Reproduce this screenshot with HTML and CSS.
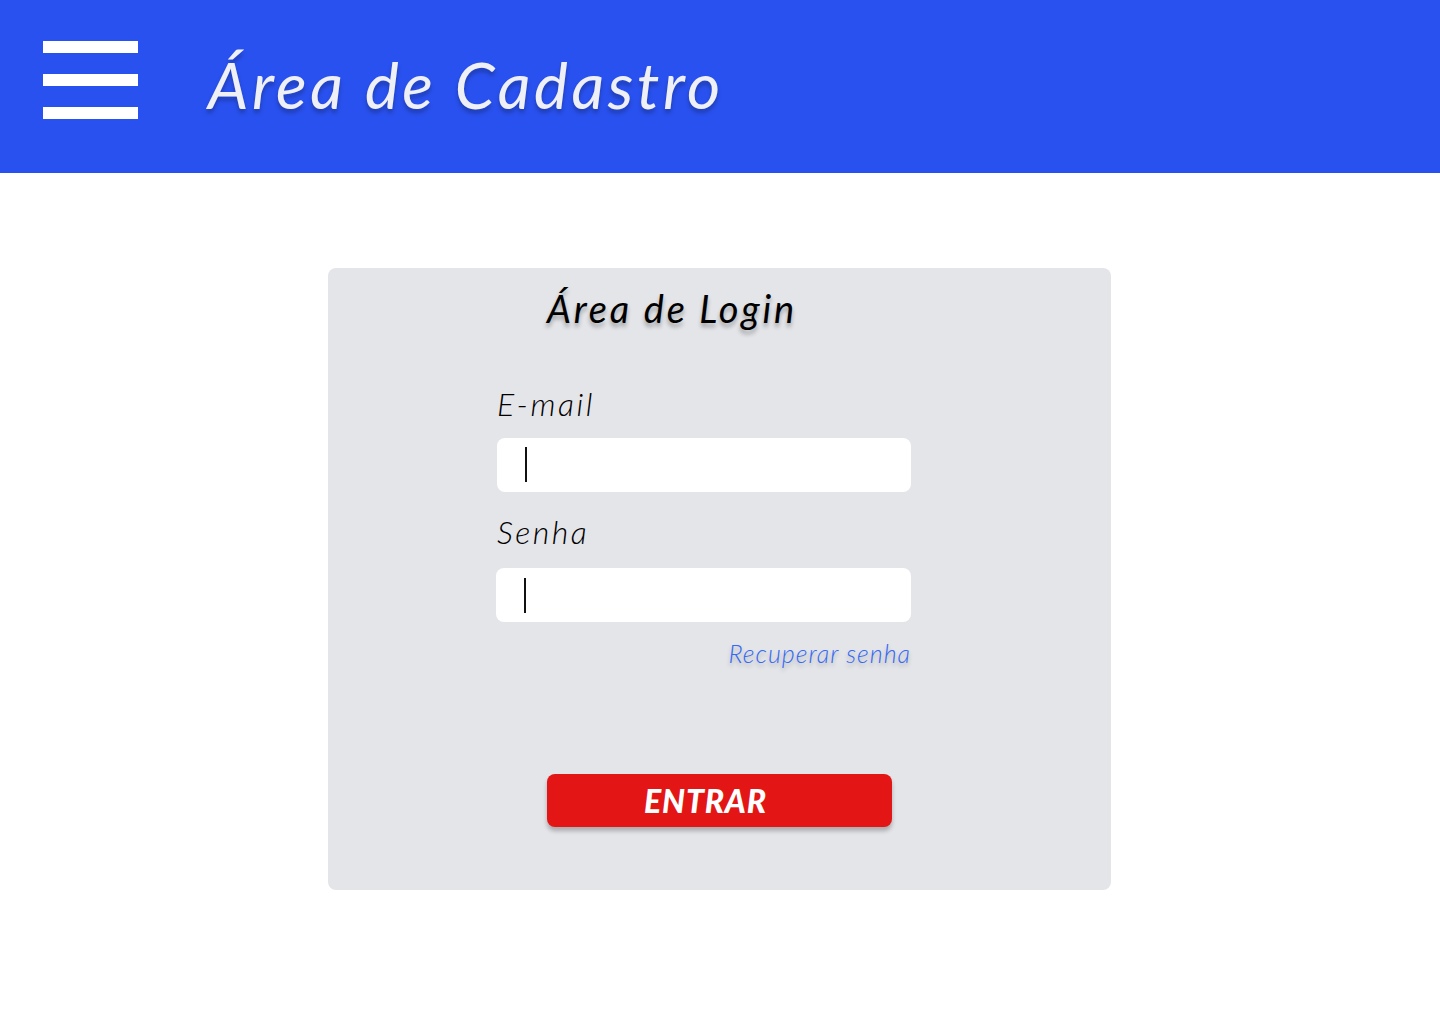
FILE: index.html
```html
<!DOCTYPE html>
<html lang="pt-BR">
<head>
<meta charset="utf-8">
<title>Área de Cadastro</title>
<link rel="stylesheet" href="styles.css">
</head>
<body>
<header class="topbar">
  <div class="menu" aria-label="Menu">
    <span class="menu-bar"></span>
    <span class="menu-bar"></span>
    <span class="menu-bar"></span>
  </div>
  <h1 class="page-title">Área de Cadastro</h1>
</header>
<main class="main">
  <section class="card">
    <h2 class="card-title">Área de Login</h2>
    <form class="form">
      <label class="label">E-mail</label>
      <div class="field"><span class="caret"></span></div>
      <label class="label label-senha">Senha</label>
      <div class="field field-senha"><span class="caret"></span></div>
      <a class="recover" href="#">Recuperar senha</a>
    </form>
    <div class="actions">
      <button class="btn" type="button"><span class="btn-text">ENTRAR</span></button>
    </div>
  </section>
</main>
</body>
</html>
```
FILE: styles.css
```css
html, body {
  margin: 0;
  padding: 0;
  background: #ffffff;
  font-family: "Lato", "Open Sans", sans-serif;
}

.topbar {
  height: 173px;
  background: #2951ef;
  display: flex;
  align-items: center;
}

.menu {
  margin-left: 43px;
  display: flex;
  flex-direction: column;
  gap: 21px;
  margin-top: -14px;
}

.menu-bar {
  display: block;
  width: 95px;
  height: 12px;
  background: #ffffff;
}

.page-title {
  margin: -2px 0 0 70px;
  font-size: 64px;
  font-style: italic;
  font-weight: 400;
  line-height: 1.2;
  letter-spacing: 3.5px;
  color: #eef0f6;
  text-shadow: 0 4px 4px rgba(0, 0, 0, 0.25);
}

.main {
  padding: 95px 0 0 328px;
  display: flex;
}

.card {
  width: 783px;
  height: 622px;
  box-sizing: border-box;
  background: #e4e5e9;
  border-radius: 8px;
  padding-top: 18px;
  display: flex;
  flex-direction: column;
}

.card-title {
  margin: 0 0 0 219px;
  font-size: 38px;
  font-style: italic;
  font-weight: 400;
  line-height: 1.2;
  letter-spacing: 2.8px;
  color: #000000;
  text-shadow: 0 4px 4px rgba(0, 0, 0, 0.3);
}

.form {
  margin-left: 169px;
  width: 414px;
  display: flex;
  flex-direction: column;
  margin-top: 53px;
}

.label {
  font-size: 32px;
  font-style: italic;
  font-weight: 300;
  line-height: 1.2;
  letter-spacing: 2.5px;
  color: #000000;
}

.field {
  height: 54px;
  background: #ffffff;
  border-radius: 8px;
  margin-top: 15px;
  display: flex;
  align-items: center;
  padding-left: 28px;
}

.field-senha {
  margin-top: 17px;
  margin-left: -1px;
}

.label-senha {
  margin-top: 21px;
}

.caret {
  display: block;
  width: 1.5px;
  height: 35px;
  background: #111111;
}

.recover {
  align-self: flex-end;
  margin-top: 16px;
  font-size: 25px;
  font-style: italic;
  font-weight: 300;
  line-height: 1.2;
  letter-spacing: 1px;
  color: #3469f4;
  text-decoration: none;
  text-shadow: 0 3px 4px rgba(0, 0, 0, 0.25);
}

.actions {
  margin-top: 106px;
  margin-left: 219px;
}

.btn {
  width: 345px;
  height: 53px;
  border: none;
  border-radius: 8px;
  background: #e31515;
  box-shadow: 0 4px 4px rgba(0, 0, 0, 0.25);
  padding: 0;
  display: flex;
  align-items: center;
  justify-content: center;
  cursor: pointer;
}

.btn-text {
  font-family: "Lato", "Open Sans", sans-serif;
  font-size: 32px;
  font-style: italic;
  font-weight: 900;
  color: #ffffff;
  letter-spacing: 0.8px;
  margin-right: 28px;
}
```
